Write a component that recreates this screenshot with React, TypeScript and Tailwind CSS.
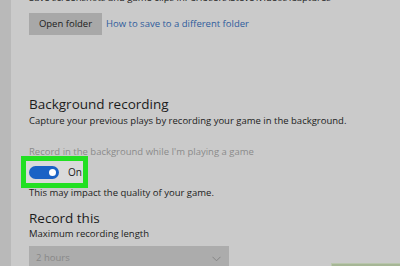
import React from 'react';

export default function App() {
  return (
    <div className="w-[400px] h-[266px] overflow-hidden flex bg-[#cacaca] text-[#1c1c1c]" style={{ fontFamily: '"Open Sans", "Noto Sans", sans-serif' }}>
      <div className="w-[11px] shrink-0 bg-[#b9b9b9]" />
      <div className="flex-1 flex flex-col pl-[18px] relative [&>*]:shrink-0">
        <p className="text-[9.5px] leading-[12px] -mt-[8px] whitespace-nowrap">Save screenshots and game clips in: C:\Users\Steve\Videos\Captures</p>
        <div className="flex items-center mt-[9px] gap-[4px]">
          <div className="w-[73px] h-[22px] bg-[#a8a8a8] flex items-center justify-center text-[9.5px]">Open folder</div>
          <span className="text-[9.5px] text-[#2f5c9c] whitespace-nowrap">How to save to a different folder</span>
        </div>
        <h2 className="text-[13.5px] leading-[18px] mt-[60px] whitespace-nowrap">Background recording</h2>
        <p className="text-[9.5px] leading-[14px] mt-[1px] whitespace-nowrap">Capture your previous plays by recording your game in the background.</p>
        <p className="text-[9.5px] leading-[12px] mt-[18px] text-[#8a8a8a] whitespace-nowrap">Record in the background while I'm playing a game</p>
        <div className="-ml-[8px] -mt-[2px] w-[67px] h-[32px] border-[5px] border-[#22e022] bg-[#dadada] flex items-center pl-[3px] gap-[9px]">
          <div className="w-[30px] h-[13px] rounded-full bg-[#1a62c5] flex items-center justify-end pr-[3px]">
            <div className="w-[7px] h-[7px] rounded-full bg-white" />
          </div>
          <span className="text-[10px] leading-[12px]">On</span>
        </div>
        <p className="text-[9.5px] leading-[10px] whitespace-nowrap">This may impact the quality of your game.</p>
        <h2 className="text-[13.5px] leading-[18px] mt-[11px] whitespace-nowrap">Record this</h2>
        <p className="text-[9.5px] leading-[14px] whitespace-nowrap">Maximum recording length</p>
        <div className="mt-[5px] w-[200px] h-[25px] bg-[#acacac] flex items-center justify-between pl-[7px] pr-[8px] text-[9.5px] text-[#888888]">
          <span>2 hours</span>
          <svg width="9" height="6" viewBox="0 0 9 6" fill="none" stroke="#858585" strokeWidth="1"><path d="M0.5 0.8 L4.5 4.8 L8.5 0.8" /></svg>
        </div>
        <div className="absolute right-0 top-[263px] w-[69px] h-[3px] bg-[#a6b695] border-t border-l border-[#b9c6ad]" />
      </div>
    </div>
  );
}
